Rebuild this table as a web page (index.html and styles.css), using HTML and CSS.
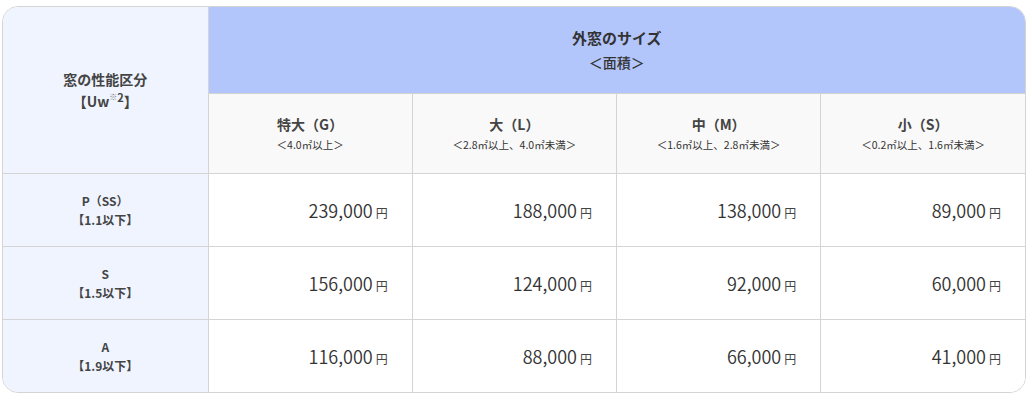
FILE: index.html
```html
<!DOCTYPE html>
<html lang="ja">
<head>
<meta charset="utf-8">
<link rel="stylesheet" href="styles.css">
</head>
<body>
<div class="table-wrap">
  <table class="price-table">
    <colgroup>
      <col class="c-first"><col><col><col><col>
    </colgroup>
    <thead>
      <tr class="row-top">
        <th rowspan="2" class="side head-side">窓の性能区分<br>【Uw<sup><span class="note">※</span>2</sup>】</th>
        <th colspan="4" class="size-head">外窓のサイズ<br><span class="size-sub">＜面積＞</span></th>
      </tr>
      <tr class="row-sizes">
        <th class="size">特大（G）<span class="range">＜4.0㎡以上＞</span></th>
        <th class="size">大（L）<span class="range">＜2.8㎡以上、4.0㎡未満＞</span></th>
        <th class="size">中（M）<span class="range">＜1.6㎡以上、2.8㎡未満＞</span></th>
        <th class="size">小（S）<span class="range">＜0.2㎡以上、1.6㎡未満＞</span></th>
      </tr>
    </thead>
    <tbody>
      <tr class="row-a">
        <th class="side">P（SS）<br>【1.1以下】</th>
        <td>239,000<span class="yen">円</span></td>
        <td>188,000<span class="yen">円</span></td>
        <td>138,000<span class="yen">円</span></td>
        <td>89,000<span class="yen">円</span></td>
      </tr>
      <tr class="row-b">
        <th class="side">S<br>【1.5以下】</th>
        <td>156,000<span class="yen">円</span></td>
        <td>124,000<span class="yen">円</span></td>
        <td>92,000<span class="yen">円</span></td>
        <td>60,000<span class="yen">円</span></td>
      </tr>
      <tr class="row-c">
        <th class="side">A<br>【1.9以下】</th>
        <td>116,000<span class="yen">円</span></td>
        <td>88,000<span class="yen">円</span></td>
        <td>66,000<span class="yen">円</span></td>
        <td>41,000<span class="yen">円</span></td>
      </tr>
    </tbody>
  </table>
</div>
</body>
</html>
```

FILE: styles.css
```css
html, body {
  margin: 0;
  padding: 0;
  background: #ffffff;
}

body {
  padding: 6px 0 0 2px;
  font-family: "Noto Sans CJK JP", "Noto Sans", sans-serif;
  color: #333333;
}

.table-wrap {
  width: 1022px;
  border: 1px solid #d4d4d4;
  border-radius: 16px;
  overflow: hidden;
}

.price-table {
  width: 1022px;
  table-layout: fixed;
  border-collapse: collapse;
  border-style: hidden;
}

.c-first {
  width: 205px;
}

.price-table th,
.price-table td {
  border: 1px solid #d4d4d4;
  padding: 0;
}

.row-top { height: 86px; }
.row-sizes { height: 80px; }
.row-a { height: 73px; }
.row-b { height: 73px; }
.row-c { height: 73px; }

.side {
  background: #eff4ff;
  color: #444444;
  font-size: 12px;
  font-weight: 700;
  line-height: 19px;
  text-align: center;
  vertical-align: middle;
}

.head-side {
  font-size: 14px;
  line-height: 22px;
}

.head-side sup {
  font-size: 11px;
  font-weight: 700;
  line-height: 0;
  vertical-align: 5px;
  color: #444444;
}

.note {
  font-size: 8px;
  font-weight: 400;
  color: #777777;
  vertical-align: 2px;
}

.size-head {
  background: #b3c6fc;
  color: #333333;
  font-size: 15px;
  font-weight: 700;
  line-height: 24px;
  text-align: center;
  padding-bottom: 2px;
}

.size-sub {
  font-size: 14px;
  font-weight: 500;
}

.size {
  background: #f9f9f9;
  color: #444444;
  font-size: 14px;
  font-weight: 700;
  line-height: 20px;
  text-align: center;
}

.range {
  display: block;
  margin-top: 3px;
  font-size: 10.5px;
  font-weight: 400;
  line-height: 16px;
  color: #333333;
}

.price-table td {
  background: #ffffff;
  text-align: right;
  padding-right: 24px;
  padding-top: 1px;
  font-size: 18px;
  font-weight: 350;
  color: #333333;
  vertical-align: middle;
}

.yen {
  font-size: 12px;
  font-weight: 400;
  margin-left: 3px;
  color: #444444;
}
```
